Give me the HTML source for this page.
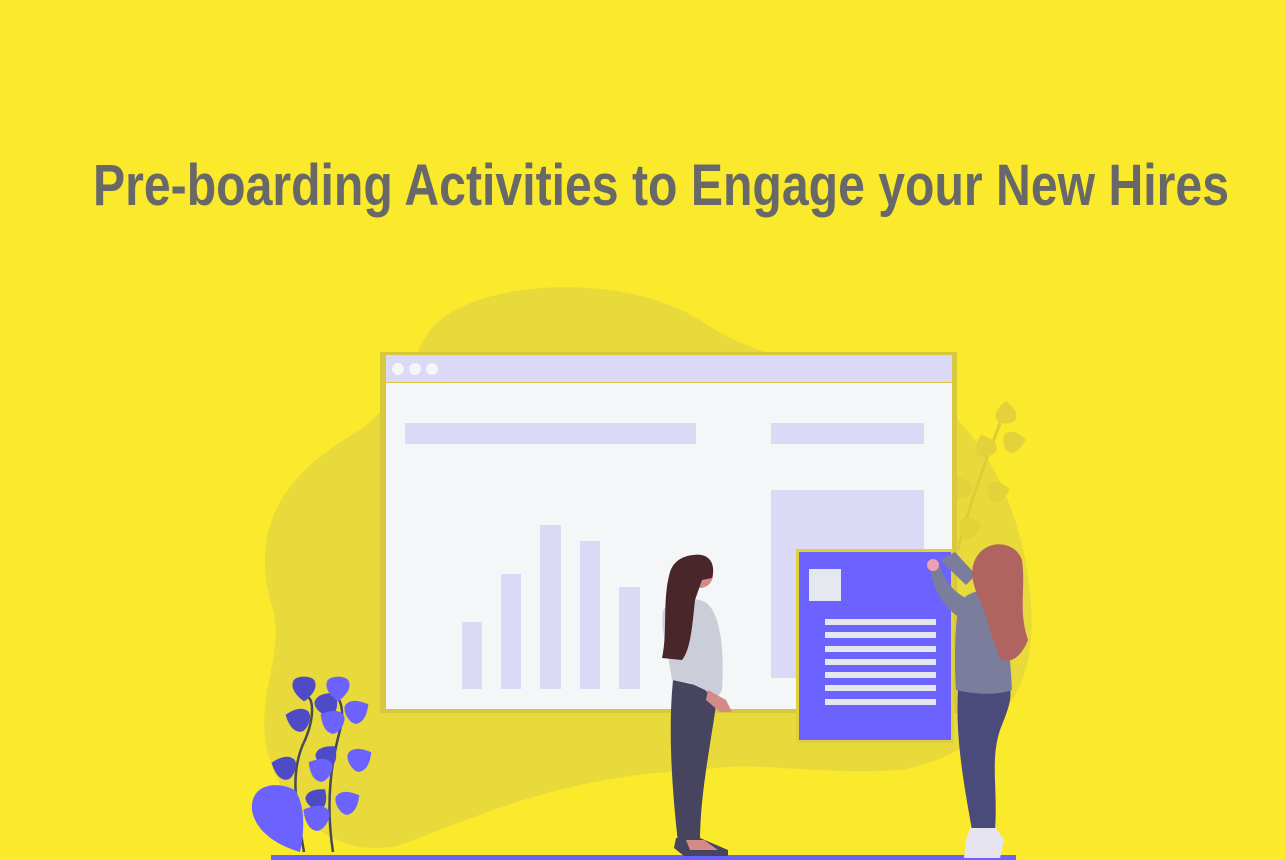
<!DOCTYPE html>
<html><head><meta charset="utf-8"><style>
html,body{margin:0;padding:0;background:#fbe92b;width:1285px;height:860px;overflow:hidden}
</style></head><body>
<svg width="1285" height="860" viewBox="0 0 1285 860" xmlns="http://www.w3.org/2000/svg">
<defs>
<path id="drop" d="M0 -14 C8 -8 12 -2 10 4 C8 10 -8 10 -10 4 C-12 -2 -8 -8 0 -14 Z"/>
</defs>
<rect width="1285" height="860" fill="#fbe92b"/>
<text x="93" y="205" font-family="Liberation Sans, sans-serif" font-weight="bold" font-size="58" fill="#686868" textLength="1136" lengthAdjust="spacingAndGlyphs">Pre-boarding Activities to Engage your New Hires</text>
<path d="M430 330 C470 280 620 270 700 320 C760 360 800 360 900 380 C1000 420 1040 560 1030 650 C1020 720 960 760 900 770 C800 775 760 760 700 770 C560 775 470 820 400 845 C340 860 290 820 270 760 C250 700 290 650 270 600 C250 520 290 470 360 430 C400 400 410 360 430 330 Z" fill="#e9da3b"/>
<g fill="#e3d23a">
<path d="M958 550 C970 500 990 450 1005 410" stroke="#ddcc3a" stroke-width="3" fill="none"/>
<use href="#drop" transform="translate(1006,415)"/>
<use href="#drop" transform="translate(1012,442) rotate(80)"/>
<use href="#drop" transform="translate(986,448) rotate(-20)"/>
<use href="#drop" transform="translate(996,492) rotate(80)"/>
<use href="#drop" transform="translate(962,490) rotate(-20)"/>
<use href="#drop" transform="translate(968,528) rotate(80)"/>
</g>
<rect x="380" y="352" width="577" height="361" fill="#d8c83e"/>
<rect x="386" y="355" width="566" height="27" fill="#dcd9f7"/>
<circle cx="398" cy="369" r="6" fill="#f5f6f7"/><circle cx="415" cy="369" r="6" fill="#f5f6f7"/><circle cx="432" cy="369" r="6" fill="#f5f6f7"/>
<rect x="386" y="383" width="566" height="326" fill="#f5f6f7"/>
<rect x="405" y="423" width="291" height="21" fill="#dcd9f7"/>
<rect x="771" y="423" width="153" height="21" fill="#dcd9f7"/>
<rect x="771" y="490" width="153" height="188" fill="#dcd9f7"/>
<rect x="462" y="622" width="20" height="67" fill="#dcd9f7"/>
<rect x="501" y="574" width="20" height="115" fill="#dcd9f7"/>
<rect x="540" y="525" width="21" height="164" fill="#dcd9f7"/>
<rect x="580" y="541" width="20" height="148" fill="#dcd9f7"/>
<rect x="619" y="587" width="21" height="102" fill="#dcd9f7"/>
<rect x="796" y="549" width="158" height="194" fill="#e0d03c"/>
<rect x="799" y="552" width="152" height="188" fill="#6c63ff"/>
<rect x="809" y="569" width="32" height="32" fill="#e6e8f0"/>
<g fill="#e6e8f0"><rect x="825" y="619" width="111" height="6"/><rect x="825" y="632" width="111" height="6"/><rect x="825" y="646" width="111" height="6"/><rect x="825" y="659" width="111" height="6"/><rect x="825" y="672" width="111" height="6"/><rect x="825" y="685" width="111" height="6"/><rect x="825" y="699" width="111" height="6"/></g>
<rect x="271" y="855" width="745" height="5" fill="#6c63ff"/>
<!-- woman left -->
<path d="M673 680 C668 730 672 790 678 842 L700 842 C700 790 712 740 718 690 Z" fill="#47445f"/>
<path d="M676 838 L700 838 L728 850 L728 856 L684 856 L674 848 Z" fill="#47445f"/>
<path d="M686 840 L704 840 L718 850 L690 850 Z" fill="#d48a86"/>
<path d="M663 612 C665 600 690 595 705 602 C718 610 725 640 722 690 L716 700 L705 690 L690 683 L672 680 C668 650 660 630 663 612 Z" fill="#cbcdd8"/>
<path d="M708 690 L726 700 L732 712 L720 712 L706 700 Z" fill="#d48a86"/>
<circle cx="700" cy="575" r="13" fill="#d48a86"/>
<path d="M693 555 C710 552 716 565 712 578 L702 580 L695 600 C692 630 690 650 682 660 L662 658 C668 630 662 600 670 572 C674 560 684 556 693 555 Z" fill="#48262a"/>
<!-- woman right -->
<path d="M958 688 C955 740 965 790 972 830 L995 830 C998 790 990 760 1000 730 C1008 710 1012 700 1010 688 Z" fill="#4a4b7a"/>
<path d="M970 828 L996 828 L1004 840 L1000 858 L964 858 L966 840 Z" fill="#e6e4f0"/>
<path d="M958 610 C960 596 975 588 990 592 C1005 600 1010 650 1012 690 C995 696 972 694 956 690 C954 660 955 630 958 610 Z" fill="#7b7d9c"/>
<path d="M930 568 L940 566 C946 585 958 595 970 600 L964 620 C948 612 934 595 930 568 Z" fill="#7b7d9c"/>
<path d="M940 560 L966 585 L976 575 L955 552 Z" fill="#7b7d9c"/>
<circle cx="933" cy="565" r="6" fill="#f0a0b0"/>
<path d="M975 560 C985 538 1015 540 1022 560 C1026 590 1018 610 1028 640 C1020 660 1008 664 1000 658 C992 640 988 620 980 600 C972 585 970 570 975 560 Z" fill="#b06460"/>
<!-- left plant -->
<g fill="none" stroke="#4a4a55" stroke-width="2.5">
<path d="M304 852 C295 800 290 770 305 740 C318 710 310 690 305 700"/>
<path d="M333 852 C325 800 332 760 340 730 C345 710 340 700 336 695"/>
</g>
<g fill="#4f4bc6">
<use href="#drop" transform="translate(304,686) rotate(180) scale(1.1)"/>
<use href="#drop" transform="translate(300,720) rotate(-70) scale(1.1)"/>
<use href="#drop" transform="translate(326,705) rotate(40) scale(1.1)"/>
<use href="#drop" transform="translate(286,768) rotate(-70) scale(1.1)"/>
<use href="#drop" transform="translate(326,757) rotate(40) scale(1)"/>
<use href="#drop" transform="translate(316,800) rotate(40) scale(1)"/>
<use href="#drop" transform="translate(285,815) rotate(-70) scale(1.1)"/>
</g>
<g fill="#6c63ff">
<use href="#drop" transform="translate(338,686) rotate(180) scale(1.1)"/>
<use href="#drop" transform="translate(355,712) rotate(60) scale(1.1)"/>
<use href="#drop" transform="translate(334,722) rotate(-60) scale(1.1)"/>
<use href="#drop" transform="translate(358,760) rotate(60) scale(1.1)"/>
<use href="#drop" transform="translate(322,770) rotate(-60) scale(1.1)"/>
<use href="#drop" transform="translate(346,803) rotate(60) scale(1.1)"/>
<use href="#drop" transform="translate(318,818) rotate(-60) scale(1.2)"/>
<path d="M252 810 C250 785 275 780 295 790 C305 805 305 830 300 852 C275 845 255 830 252 810 Z"/>
</g>
</svg>
</body></html>
